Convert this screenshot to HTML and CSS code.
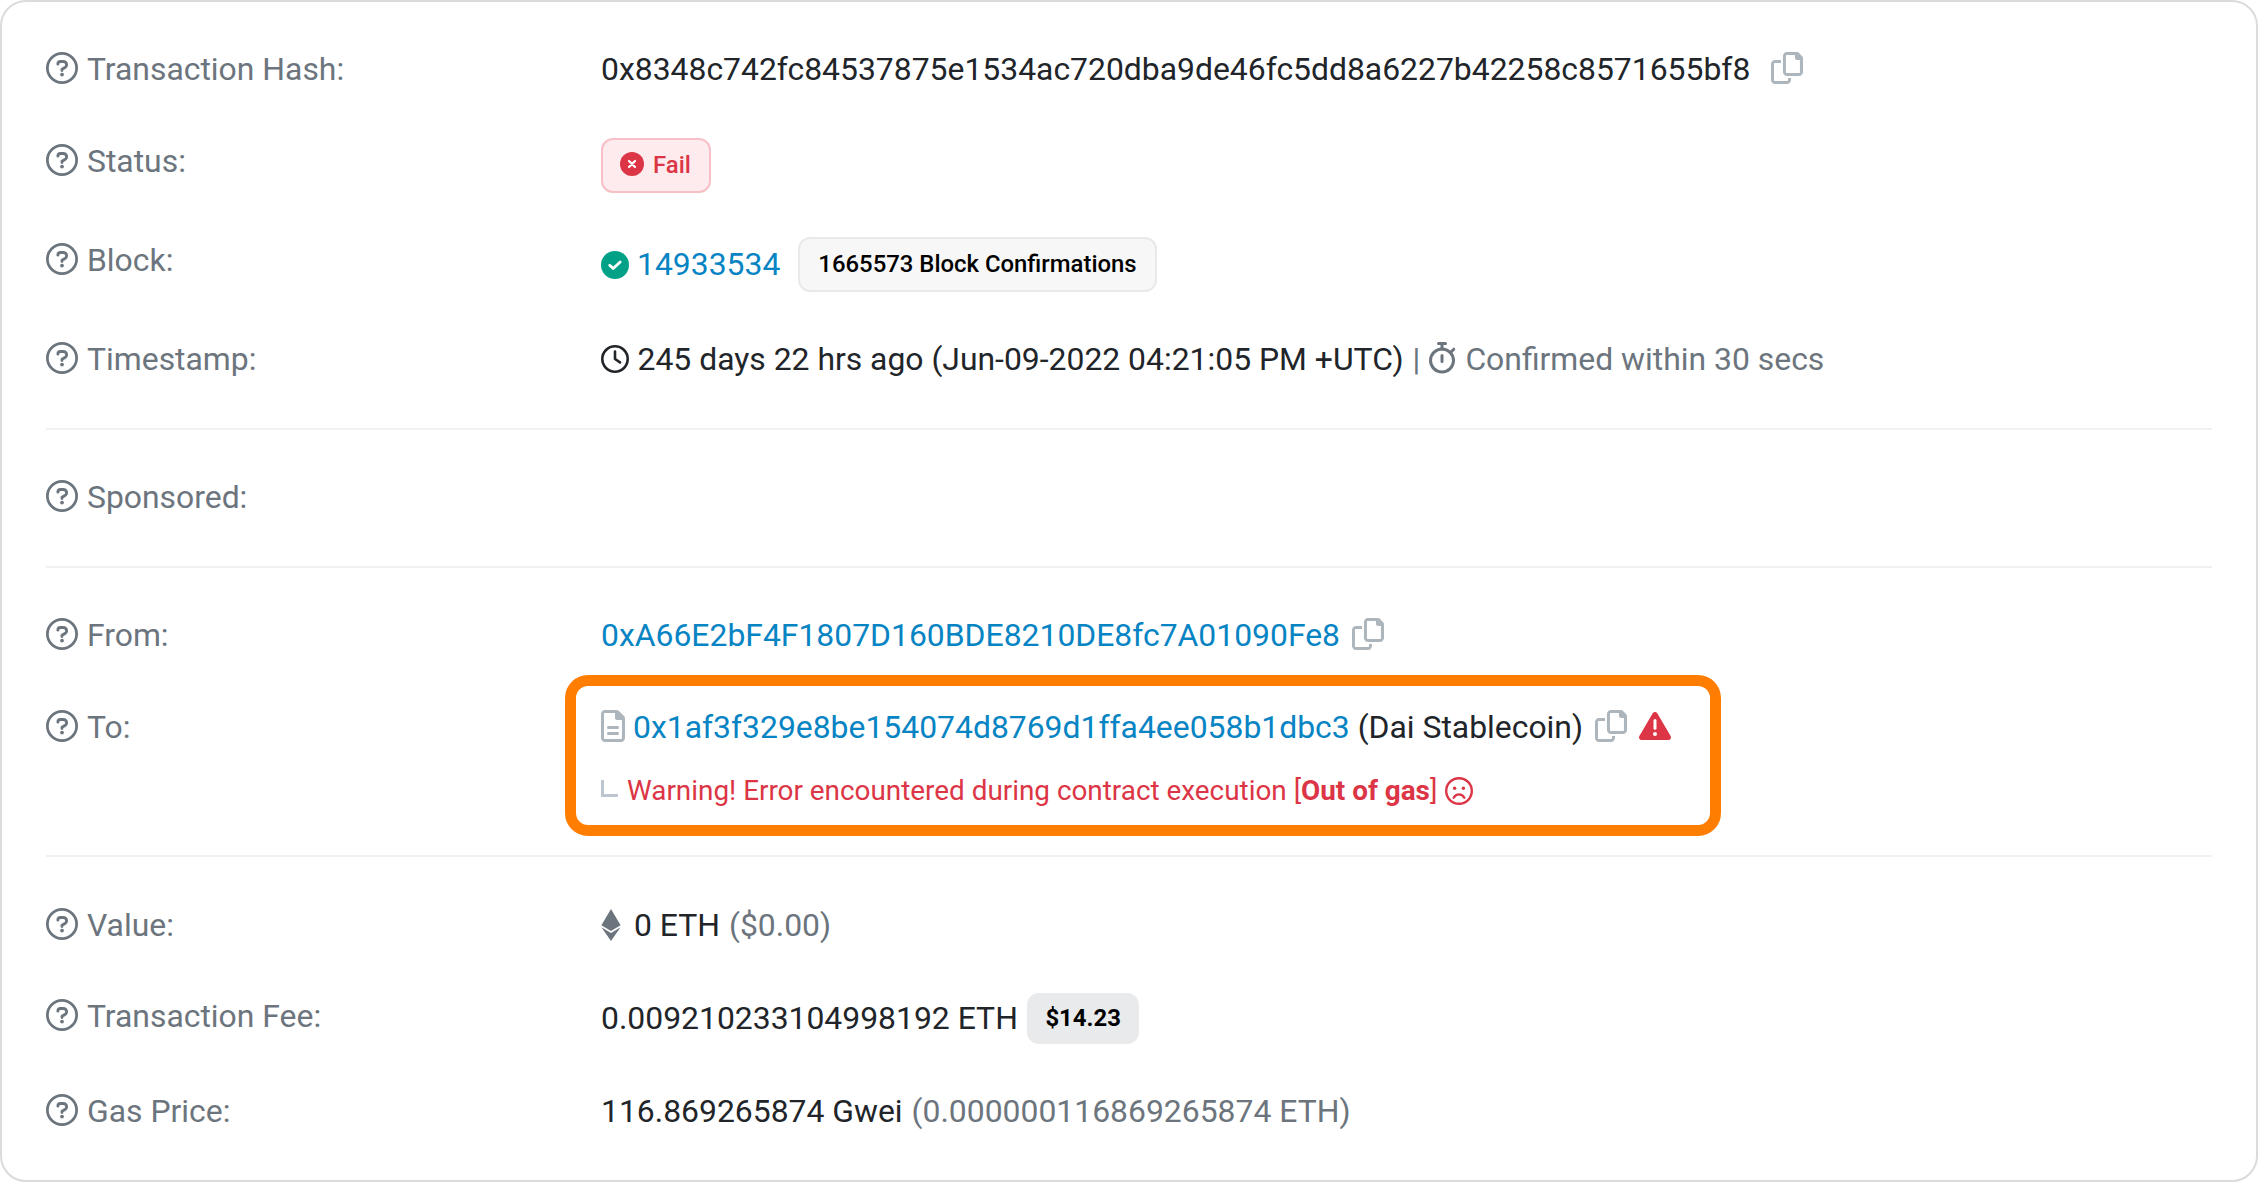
FILE: index.html
```html
<!DOCTYPE html>
<html lang="en">
<head>
<meta charset="utf-8">
<title>Transaction Details</title>
<link rel="stylesheet" href="styles.css">
</head>
<body>
<svg class="sprite" aria-hidden="true">
  <symbol id="help" viewBox="0 0 512 512"><circle cx="256" cy="256" r="234" fill="none" stroke="currentColor" stroke-width="44"/><path d="M190 194c0-25 18-42 42-42h44c30 0 54 22 54 50 0 20-10 36-26 46l-48 29v20" fill="none" stroke="currentColor" stroke-width="46" stroke-linecap="round" stroke-linejoin="round"/><circle cx="256" cy="360" r="30" fill="currentColor"/></symbol>
  <symbol id="copy" viewBox="0 0 512 512"><path d="M502.600 70.630l-61.250-61.250C435.400 3.371 427.200 0 418.700 0H255.100c-35.350 0-64 28.660-64 64l.0195 256C192 355.400 220.700 384 256 384h192c35.200 0 64-28.800 64-64V93.250C512 84.770 508.600 76.630 502.600 70.630zM464 320c0 8.836-7.164 16-16 16H255.100c-8.838 0-16-7.164-16-16L239.100 64.130c0-8.836 7.164-16 16-16h128L384 96c0 17.670 14.330 32 32 32h47.100V320zM272 448c0 8.836-7.164 16-16 16H63.100c-8.838 0-16-7.164-16-16L47.980 192.100c0-8.836 7.164-16 16-16H160V128H63.990c-35.350 0-64 28.650-64 64l.0098 256C.002 483.300 28.660 512 64 512h192c35.200 0 64-28.800 64-64v-32h-47.100L272 448z"/></symbol>
  <symbol id="file" viewBox="0 0 384 512"><path d="M365.300 93.380l-74.630-74.640C278.600 6.742 262.300 0 245.400 0H64C28.650 0 0 28.650 0 64l.0065 384c0 35.340 28.650 64 64 64H320c35.200 0 64-28.800 64-64V138.600C384 121.700 377.300 105.400 365.300 93.380zM336 448c0 8.836-7.164 16-16 16H64.020c-8.838 0-16-7.164-16-16L48 64.130c0-8.836 7.164-16 16-16h160L224 128c0 17.670 14.330 32 32 32h79.100V448zM96 280C96 293.300 106.800 304 120 304h144C277.300 304 288 293.300 288 280S277.300 256 264 256h-144C106.800 256 96 266.800 96 280zM264 352h-144C106.800 352 96 362.800 96 376s10.750 24 24 24h144c13.250 0 24-10.750 24-24S277.300 352 264 352z"/></symbol>
</svg>
<main class="card">
  <section class="section">
    <div class="row"><div class="label"><svg class="help"><use href="#help"/></svg>Transaction Hash:</div><div class="value">0x8348c742fc84537875e1534ac720dba9de46fc5dd8a6227b42258c8571655bf8<svg class="copy copy-wide"><use href="#copy"/></svg></div></div>
    <div class="row row-badge"><div class="label"><svg class="help"><use href="#help"/></svg>Status:</div><div class="value"><span class="badge badge-fail"><svg class="fail-icon" viewBox="0 0 24 24"><circle cx="12" cy="12" r="12" fill="currentColor"/><path d="M9 9l6 6M15 9l-6 6" stroke="#fff" stroke-width="2.200" stroke-linecap="round"/></svg>Fail</span></div></div>
    <div class="row row-badge"><div class="label"><svg class="help"><use href="#help"/></svg>Block:</div><div class="value"><svg class="ok-icon" viewBox="0 0 28 28"><circle cx="14" cy="14" r="14" fill="currentColor"/><path d="M8.700 14.200l3.500 3.400 7-6.600" fill="none" stroke="#fff" stroke-width="2.800" stroke-linecap="round" stroke-linejoin="round"/></svg><a class="link">14933534</a><span class="badge badge-plain">1665573 Block Confirmations</span></div></div>
    <div class="row"><div class="label"><svg class="help"><use href="#help"/></svg>Timestamp:</div><div class="value"><svg class="clock" viewBox="0 0 28 28"><path d="M14 6.500V14l5 3.400" fill="none" stroke="currentColor" stroke-width="2.600" stroke-linecap="round" stroke-linejoin="round"/><circle cx="14" cy="14" r="12.700" fill="none" stroke="currentColor" stroke-width="2.600"/></svg>245 days 22 hrs ago (Jun-09-2022 04:21:05 PM +UTC)<span class="muted">|</span><span class="confirmed"><svg class="stopwatch" viewBox="0 0 28 32"><circle cx="14" cy="18.500" r="11.500" fill="none" stroke="currentColor" stroke-width="3"/><path d="M10.500 1.500h7M14 2v5M23.500 9.500l2.300-2.300M14 13.500v6" fill="none" stroke="currentColor" stroke-width="3" stroke-linecap="round"/></svg>Confirmed within 30 secs</span></div></div>
  </section>
  <section class="section">
    <div class="row"><div class="label"><svg class="help"><use href="#help"/></svg>Sponsored:</div></div>
  </section>
  <section class="section">
    <div class="row"><div class="label"><svg class="help"><use href="#help"/></svg>From:</div><div class="value"><a class="link">0xA66E2bF4F1807D160BDE8210DE8fc7A01090Fe8</a><svg class="copy"><use href="#copy"/></svg></div></div>
    <div class="row row-to"><div class="label"><svg class="help"><use href="#help"/></svg>To:</div>
      <div class="recipient">
        <div class="value"><svg class="file"><use href="#file"/></svg><a class="link">0x1af3f329e8be154074d8769d1ffa4ee058b1dbc3</a><span class="token">(Dai Stablecoin)</span><svg class="copy"><use href="#copy"/></svg><svg class="alert" viewBox="0 0 32 28"><path d="M13.700 1.300a2.650 2.650 0 0 1 4.600 0l13.300 22.700A2.650 2.650 0 0 1 29.300 28H2.700A2.650 2.650 0 0 1 .4 24z" fill="currentColor"/><path d="M16 8.500v7.800" stroke="#fff" stroke-width="3" stroke-linecap="round"/><circle cx="16" cy="22" r="2" fill="#fff"/></svg></div>
        <div class="warning"><span class="elbow"></span>Warning! Error encountered during contract execution [<b>Out of gas</b>]<svg class="frown" viewBox="0 0 28 28"><circle cx="14" cy="14" r="12.800" fill="none" stroke="currentColor" stroke-width="2.400"/><circle cx="9.600" cy="11.300" r="1.700" fill="currentColor"/><circle cx="18.400" cy="11.300" r="1.700" fill="currentColor"/><path d="M8.700 20.700c2.400-4.400 8.200-4.400 10.600 0" fill="none" stroke="currentColor" stroke-width="2.400" stroke-linecap="round"/></svg></div>
      </div>
    </div>
  </section>
  <section class="section section-last">
    <div class="row row-amount"><div class="label"><svg class="help"><use href="#help"/></svg>Value:</div><div class="value"><svg class="eth" viewBox="0 0 20 32"><path d="M10 0l9.600 16.300L10 22 .4 16.300zM10 24l9.600-5.800L10 32 .4 18.200z" fill="currentColor"/></svg>0 ETH<span class="muted">($0.00)</span></div></div>
    <div class="row row-fee"><div class="label"><svg class="help"><use href="#help"/></svg>Transaction Fee:</div><div class="value">0.009210233104998192 ETH<span class="badge badge-price">$14.23</span></div></div>
    <div class="row"><div class="label"><svg class="help"><use href="#help"/></svg>Gas Price:</div><div class="value">116.869265874 Gwei<span class="muted">(0.000000116869265874 ETH)</span></div></div>
  </section>
</main>
</body>
</html>
```

FILE: styles.css
```css
* { box-sizing: border-box; }
body { margin: 0; background: #fff; }
svg { display: block; flex: none; fill: currentColor; }
b { font-weight: 700; }
.sprite { position: absolute; width: 0; height: 0; }

.card {
  height: 1182px;
  padding: 0 44px;
  border: 2px solid #dbdbdb;
  border-radius: 26px;
  font: 31.88px/48px Roboto, "Liberation Sans", sans-serif;
  color: #212529;
  white-space: nowrap;
}
.section {
  display: flex;
  flex-direction: column;
  gap: 44px;
  padding: 43px 0 45px;
  border-bottom: 2px solid #f0f1f2;
}
.section-last { padding-top: 44px; border: 0; }

.row { display: grid; grid-template-columns: 555px 1fr; align-items: start; height: 48px; }
.row-badge { height: 55px; }
.row-to { height: 107px; }
.row-amount { height: 47px; }
.row-fee { height: 51px; }

.label { display: flex; align-items: center; color: #6c757d; }
.value { display: flex; align-items: center; }
.row-badge .value { height: 57px; }
.row-badge .link { margin-top: -2px; }
.row-fee .value { height: 51px; }
.help { width: 32px; height: 32px; margin: -2px 9px 0 0; }

.link { color: #0784c3; }
.muted { margin-left: 9px; color: #6c757d; }
.token { margin-left: 8px; }
.confirmed { display: flex; align-items: center; margin-left: 8px; color: #6c757d; }

.copy { width: 32px; height: 32px; margin: -2px 0 0 12px; color: #adb5bd; }
.copy-wide { margin-left: 21px; }
.file { width: 24px; height: 32px; margin: -2px 8px 0 0; color: #adb5bd; }
.ok-icon { width: 28px; height: 28px; margin-right: 8px; color: #00a186; }
.clock { width: 28px; height: 28px; margin-right: 8.500px; }
.stopwatch { width: 28px; height: 32px; margin: -2px 9px 0 0; }
.eth { width: 20px; height: 32px; margin-right: 13px; color: #6c757d; }
.alert { width: 32px; height: 28px; margin: -2px 0 0 12px; color: #dc3545; }

.badge {
  display: flex;
  align-items: center;
  height: 55px;
  padding: 0 18px 2px;
  border: 2px solid;
  border-radius: 12px;
  font-size: 23.9px;
  font-weight: 500;
  color: #000;
}
.badge-fail { color: #dc3545; background: #fdebed; border-color: #f8bfc6; }
.fail-icon { width: 24px; height: 24px; margin: -1px 9px 0 -1px; }
.badge-plain { margin-left: 18px; background: #f7f7f7; border-color: #e9e9ea; }
.badge-price { height: 51px; margin: 1px 0 0 9px; padding: 0 18.500px; border: 0; background: #e9eaec; font-weight: 700; }

/* Highlighted frame around the recipient and its execution error */
.recipient {
  width: 1156px;
  height: 161px;
  margin: -28px 0 0 -36px;
  padding: 17px 25px;
  border: 11px solid #ff7d00;
  border-radius: 23px;
}
.warning { display: flex; align-items: center; height: 42px; margin-top: 19px; font-size: 27.86px; color: #dc3545; }
.elbow { width: 17px; height: 17px; margin: -5px 9px 0 0; border: solid #bdc5d1; border-width: 0 0 3px 3px; border-radius: 1px; }
.frown { width: 28px; height: 28px; margin: -1px 0 0 8px; }
```
